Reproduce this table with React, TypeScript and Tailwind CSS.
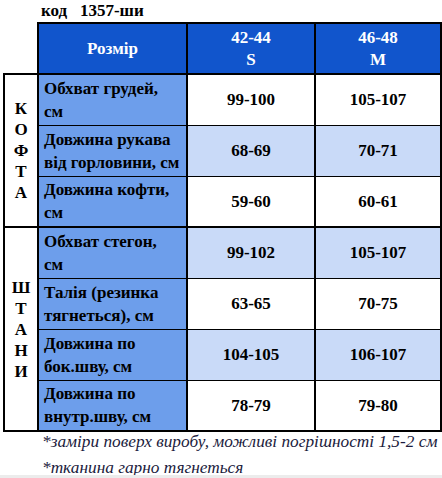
type Row = { label: string[]; s: string; m: string; light: boolean; last?: boolean };

const jacket: Row[] = [
  { label: ["Обхват грудей,", "см"], s: "99-100", m: "105-107", light: false },
  { label: ["Довжина рукава", "від горловини, см"], s: "68-69", m: "70-71", light: true },
  { label: ["Довжина кофти,", "см"], s: "59-60", m: "60-61", light: false, last: true },
];

const pants: Row[] = [
  { label: ["Обхват стегон,", "см"], s: "99-102", m: "105-107", light: true },
  { label: ["Талія (резинка", "тягнеться), см"], s: "63-65", m: "70-75", light: false },
  { label: ["Довжина по", "бок.шву, см"], s: "104-105", m: "106-107", light: true },
  { label: ["Довжина по", "внутр.шву, см"], s: "78-79", m: "79-80", light: false, last: true },
];

function SectionRows({ title, rows }: { title: string; rows: Row[] }) {
  return (
    <>
      {rows.map((r, i) => {
        const bottom = r.last ? "border-b-2" : "border-b";
        const bg = r.light ? "bg-[#c9daf8]" : "bg-white";
        return (
          <tr key={i} className="h-[51px]">
            {i === 0 && (
              <td
                rowSpan={rows.length}
                className="border-2 border-black bg-white text-center align-middle p-0"
              >
                <div className="flex flex-col items-center text-[17px] font-bold leading-[21px] text-black">
                  {title.split("").map((c, j) => (
                    <span key={j}>{c}</span>
                  ))}
                </div>
              </td>
            )}
            <td className={`${bottom} border-l-2 border-r-2 border-black bg-[#6d9eeb] pl-[5px] pr-1 text-[17px] font-bold leading-[23px] text-black`}>
              {r.label[0]}
              <br />
              {r.label[1]}
            </td>
            <td className={`${bottom} border-r-2 border-black ${bg} text-center text-[17px] font-bold text-black`}>
              {r.s}
            </td>
            <td className={`${bottom} border-r-2 border-black ${bg} text-center text-[17px] font-bold text-black`}>
              {r.m}
            </td>
          </tr>
        );
      })}
    </>
  );
}

export default function App() {
  return (
    <div className="relative h-[478px] w-[442px] overflow-hidden bg-white [font-family:Liberation_Serif,serif]">
      <div className="pl-[41px] pt-[1px] h-[22px] text-[17px] font-bold leading-[20px] text-black">
        код&nbsp;&nbsp;&nbsp;1357-ши
      </div>
      <table className="ml-[3px] w-[437px] table-fixed border-collapse">
        <colgroup>
          <col className="w-[34px]" />
          <col className="w-[149px]" />
          <col className="w-[128px]" />
          <col className="w-[126px]" />
        </colgroup>
        <tbody>
          <tr className="h-[51px]">
            <td className="p-0" />
            <td className="border-2 border-black bg-[#1155cc] text-center text-[17px] font-bold text-white">
              Розмір
            </td>
            <td className="border-2 border-black bg-[#1155cc] text-center text-[17px] font-bold leading-[22px] text-white">
              42-44
              <br />S
            </td>
            <td className="border-2 border-black bg-[#1155cc] text-center text-[17px] font-bold leading-[22px] text-white">
              46-48
              <br />M
            </td>
          </tr>
          <SectionRows title="КОФТА" rows={jacket} />
          <SectionRows title="ШТАНИ" rows={pants} />
        </tbody>
      </table>
      <div className="-mt-[3px] pl-[42px] text-[17.3px] italic leading-[26px] whitespace-nowrap text-[#1b1b3d]">
        <div>*заміри поверх виробу, можливі погрішності 1,5-2 см</div>
        <div>*тканина гарно тягнеться</div>
      </div>
      <div className="absolute bottom-0 left-0 h-[3px] w-full bg-[#ececec]" />
    </div>
  );
}
